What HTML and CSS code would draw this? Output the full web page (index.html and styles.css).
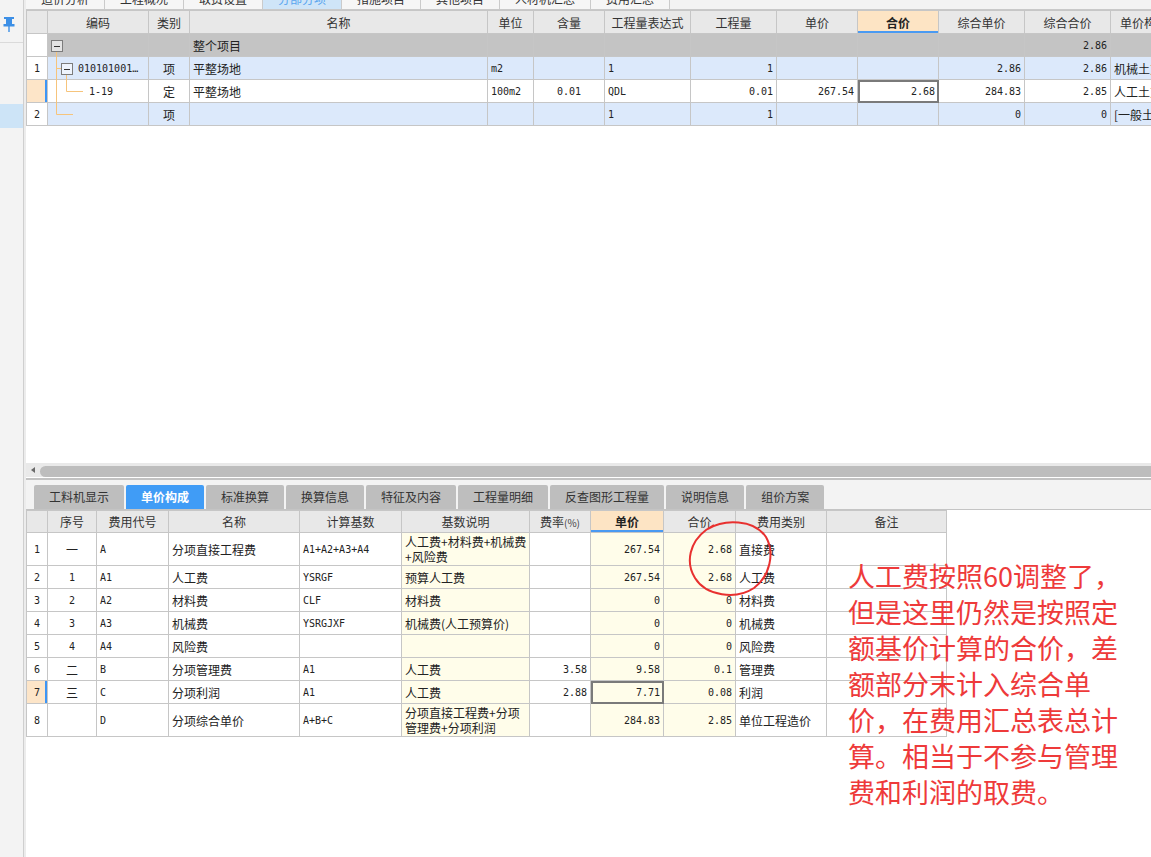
FILE: index.html
```html
<!DOCTYPE html>
<html lang="zh-CN">
<head>
<meta charset="utf-8">
<title>分部分项 - 单价构成</title>
<link rel="stylesheet" href="styles.css">
</head>
<body>
<div class="app">
  <aside class="side">
    <div class="side-top">
      <svg class="pin" width="16" height="16" viewBox="0 0 16 16"><path d="M3 0h10v2h-2v5h2.5v2.4h-4.8v5.6h-1.4v-5.6h-4.8v-2.4h2.5v-5h-2z" fill="#3c8fe6"/></svg>
    </div>
    <div class="side-gap"></div>
    <div class="side-hl"></div>
  </aside>

  <main class="main">
    <nav class="toptabs">
      <div class="toptab"><span>造价分析</span></div>
      <div class="toptab"><span>工程概况</span></div>
      <div class="toptab"><span>取费设置</span></div>
      <div class="toptab active"><span>分部分项</span></div>
      <div class="toptab"><span>措施项目</span></div>
      <div class="toptab"><span>其他项目</span></div>
      <div class="toptab"><span>人材机汇总</span></div>
      <div class="toptab"><span>费用汇总</span></div>
    </nav>

    <section class="grid-top">
      <table class="tbl tbl-top">
        <colgroup>
          <col class="w21"><col class="w101"><col class="w41"><col class="w298"><col class="w46"><col class="w71"><col class="w86"><col class="w86"><col class="w81"><col class="w81"><col class="w86"><col class="w86"><col class="w100">
        </colgroup>
        <tr class="hd">
          <th></th><th>编码</th><th>类别</th><th>名称</th><th>单位</th><th>含量</th><th>工程量表达式</th><th>工程量</th><th>单价</th><th class="hot">合价</th><th>综合单价</th><th>综合合价</th><th class="l">单价构成</th>
        </tr>
        <tr class="r-grey">
          <td class="rn"></td><td></td><td></td><td class="b">整个项目</td><td></td><td></td><td></td><td></td><td></td><td></td><td></td><td class="r n b">2.86</td><td></td>
        </tr>
        <tr class="r-blue">
          <td class="rn n c">1</td><td class="code1 n">010101001…</td><td class="c">项</td><td>平整场地</td><td class="n">m2</td><td></td><td class="n">1</td><td class="r n">1</td><td></td><td></td><td class="r n">2.86</td><td class="r n">2.86</td><td>机械土方工程</td>
        </tr>
        <tr class="r-white">
          <td class="rn edit"></td><td class="code2 n">1-19</td><td class="c">定</td><td>平整场地</td><td class="n">100m2</td><td class="c n">0.01</td><td class="n">QDL</td><td class="r n">0.01</td><td class="r n">267.54</td><td class="r n sel">2.68</td><td class="r n">284.83</td><td class="r n">2.85</td><td>人工土方工程</td>
        </tr>
        <tr class="r-blue">
          <td class="rn n c">2</td><td></td><td class="c">项</td><td></td><td></td><td></td><td class="n">1</td><td class="r n">1</td><td></td><td></td><td class="r n">0</td><td class="r n">0</td><td>[一般土建工程]</td>
        </tr>
      </table>
      <svg class="tree" width="80" height="120" viewBox="0 0 80 120">
        <g stroke="#f6c47c" stroke-width="1" fill="none">
          <path d="M30.5 42V104.5H47"/>
          <path d="M30.5 58.5H35"/>
          <path d="M40.5 65V81.5H57"/>
        </g>
        <g stroke="#7c7c7c" stroke-width="1">
          <rect x="25.5" y="30.5" width="11" height="11" fill="#e4e4e4"/>
          <rect x="35.5" y="53.5" width="11" height="11" fill="#eef4fd"/>
        </g>
        <g stroke="#333" stroke-width="1">
          <path d="M28 36.5h6"/>
          <path d="M38 59.5h6"/>
        </g>
      </svg>
    </section>

    <div class="hscroll">
      <span class="arrow"></span>
      <span class="thumb"></span>
    </div>
    <div class="splitter"></div>

    <nav class="subtabs">
      <div class="subtab">工料机显示</div>
      <div class="subtab active">单价构成</div>
      <div class="subtab">标准换算</div>
      <div class="subtab">换算信息</div>
      <div class="subtab">特征及内容</div>
      <div class="subtab">工程量明细</div>
      <div class="subtab">反查图形工程量</div>
      <div class="subtab">说明信息</div>
      <div class="subtab">组价方案</div>
    </nav>

    <section class="grid-bottom">
      <table class="tbl tbl-bottom">
        <colgroup>
          <col class="w21"><col class="w49"><col class="w72"><col class="w131"><col class="w102"><col class="w128"><col class="w61"><col class="w73"><col class="w72"><col class="w91"><col class="w120">
        </colgroup>
        <tr class="hd">
          <th></th><th>序号</th><th>费用代号</th><th>名称</th><th>计算基数</th><th>基数说明</th><th>费率<small>(%)</small></th><th class="hot">单价</th><th>合价</th><th>费用类别</th><th>备注</th>
        </tr>
        <tr class="tall">
          <td class="rn n c">1</td><td class="c">一</td><td class="n">A</td><td>分项直接工程费</td><td class="n">A1+A2+A3+A4</td><td class="y two">人工费+材料费+机械费<br>+风险费</td><td></td><td class="y r n">267.54</td><td class="y r n">2.68</td><td>直接费</td><td></td>
        </tr>
        <tr>
          <td class="rn n c">2</td><td class="c n">1</td><td class="n">A1</td><td>人工费</td><td class="n">YSRGF</td><td class="y">预算人工费</td><td></td><td class="y r n">267.54</td><td class="y r n">2.68</td><td>人工费</td><td></td>
        </tr>
        <tr>
          <td class="rn n c">3</td><td class="c n">2</td><td class="n">A2</td><td>材料费</td><td class="n">CLF</td><td class="y">材料费</td><td></td><td class="y r n">0</td><td class="y r n">0</td><td>材料费</td><td></td>
        </tr>
        <tr>
          <td class="rn n c">4</td><td class="c n">3</td><td class="n">A3</td><td>机械费</td><td class="n">YSRGJXF</td><td class="y">机械费(人工预算价)</td><td></td><td class="y r n">0</td><td class="y r n">0</td><td>机械费</td><td></td>
        </tr>
        <tr>
          <td class="rn n c">5</td><td class="c n">4</td><td class="n">A4</td><td>风险费</td><td></td><td class="y"></td><td></td><td class="y r n">0</td><td class="y r n">0</td><td>风险费</td><td></td>
        </tr>
        <tr>
          <td class="rn n c">6</td><td class="c">二</td><td class="n">B</td><td>分项管理费</td><td class="n">A1</td><td class="y">人工费</td><td class="r n">3.58</td><td class="y r n">9.58</td><td class="y r n">0.1</td><td>管理费</td><td></td>
        </tr>
        <tr>
          <td class="rn n c edit b">7</td><td class="c">三</td><td class="n">C</td><td>分项利润</td><td class="n">A1</td><td class="y">人工费</td><td class="r n">2.88</td><td class="y r n sel">7.71</td><td class="y r n">0.08</td><td>利润</td><td></td>
        </tr>
        <tr class="tall">
          <td class="rn n c">8</td><td></td><td class="n">D</td><td>分项综合单价</td><td class="n">A+B+C</td><td class="y two">分项直接工程费+分项<br>管理费+分项利润</td><td></td><td class="y r n">284.83</td><td class="y r n">2.85</td><td>单位工程造价</td><td></td>
        </tr>
      </table>
      <svg class="circle" width="120" height="100" viewBox="0 0 120 100">
        <path d="M38 19C54 9 84 9 96 27C105 43 100 66 84 78C66 90 36 86 25 68C15 52 20 32 36 20L44 15" fill="none" stroke="#e8302f" stroke-width="2"/>
      </svg>
      <p class="note">人工费按照60调整了，<br>但是这里仍然是按照定<br>额基价计算的合价，差<br>额部分末计入综合单<br>价，在费用汇总表总计<br>算。相当于不参与管理<br>费和利润的取费。</p>
    </section>
  </main>
</div>
</body>
</html>
```

FILE: styles.css
```css
* { box-sizing: border-box; }

html, body {
  margin: 0;
  padding: 0;
}

body {
  width: 1151px;
  height: 857px;
  overflow: hidden;
  background: #ffffff;
  color: #222222;
  font-family: "Noto Sans CJK SC", "Noto Sans", sans-serif;
  font-size: 12px;
}

.app {
  display: flex;
  height: 857px;
}

/* ---------- left strip ---------- */
.side {
  width: 24px;
  flex: none;
  background: #f3f3f3;
  border-right: 1px solid #cfcfcf;
  display: flex;
  flex-direction: column;
}

.side-top {
  height: 43px;
  border-bottom: 1px solid #dadada;
  padding: 17px 0 0 1px;
}

.pin { display: block; }

.side-gap { height: 61px; }

.side-hl {
  height: 24px;
  background: #cde4f7;
}

/* ---------- main ---------- */
.main {
  flex: 1;
  min-width: 0;
  border-left: 2px solid #ececec;
  display: flex;
  flex-direction: column;
}

.toptabs {
  height: 10px;
  flex: none;
  display: flex;
  background: #f3f3f3;
  border-bottom: 1px solid #c9c9c9;
  overflow: hidden;
}

.toptab {
  flex: none;
  padding: 0 15px;
  background: #f6f6f6;
  border-right: 1px solid #cbcbcb;
  color: #333333;
  line-height: 12px;
  overflow: hidden;
}

.toptab span {
  display: block;
  margin-top: -7px;
}

.toptab.active {
  background: #cfe5f8;
  color: #5aa6ef;
}

/* ---------- tables ---------- */
.grid-top {
  position: relative;
  height: 453px;
  flex: none;
  overflow: hidden;
  background: #ffffff;
}

.tbl {
  border-collapse: collapse;
  table-layout: fixed;
}

.tbl-top { width: 1184px; }
.tbl-bottom { width: 920px; }

.tbl th,
.tbl td {
  border: 1px solid #c6c6c6;
  padding: 0 3px;
  white-space: nowrap;
  overflow: hidden;
  vertical-align: middle;
  font-weight: normal;
  text-align: left;
}

.tbl th {
  background: #e8e8e8;
  color: #333333;
  text-align: center;
}

.tbl th.l { text-align: left; padding-left: 9px; }

.tbl th.hot {
  background: #fde4c4;
  font-weight: bold;
  color: #222222;
  box-shadow: inset 0 -2px 0 #4a9af2;
}

.tbl-top tr { height: 23px; }
.tbl-top tr.hd { height: 23px; }
.tbl-bottom tr { height: 23px; }
.tbl-bottom tr.hd { height: 22px; }
.tbl-bottom tr.tall { height: 33px; }

.w21 { width: 21px; }
.w41 { width: 41px; }
.w46 { width: 46px; }
.w49 { width: 49px; }
.w61 { width: 61px; }
.w71 { width: 71px; }
.w72 { width: 72px; }
.w73 { width: 73px; }
.w81 { width: 81px; }
.w86 { width: 86px; }
.w91 { width: 91px; }
.w100 { width: 100px; }
.w101 { width: 101px; }
.w102 { width: 102px; }
.w120 { width: 120px; }
.w128 { width: 128px; }
.w131 { width: 131px; }
.w298 { width: 298px; }

.r-grey td { background: #c4c4c4; }
.r-blue td { background: #dce9fb; }
.r-white td { background: #ffffff; }

.tbl td.rn { background: #ffffff; }
.tbl td.rn.edit {
  background: #fde5c8;
  box-shadow: inset -2px 0 0 #3d95f5;
}

.n {
  font-family: "DejaVu Sans Mono", "Liberation Mono", monospace;
  font-size: 10px;
}

.c { text-align: center !important; }
.r { text-align: right !important; }
.b { font-weight: bold; }

.tbl td.y { background: #fffdea; }

.tbl td.two { line-height: 15px; }

.tbl td.sel {
  outline: 2px solid #7a7a7a;
  outline-offset: -2px;
}

.code1 { padding-left: 30px !important; }
.code2 { padding-left: 41px !important; }

.tree {
  position: absolute;
  left: 0;
  top: 0;
  pointer-events: none;
}

/* ---------- scrollbar / splitter ---------- */
.hscroll {
  height: 14px;
  flex: none;
  display: flex;
  align-items: center;
  background: #e9e9e9;
  padding-left: 5px;
}

.arrow {
  width: 0;
  height: 0;
  border-top: 3px solid transparent;
  border-bottom: 3px solid transparent;
  border-right: 4px solid #6a6a6a;
}

.thumb {
  flex: 1;
  height: 11px;
  margin-left: 5px;
  margin-top: 2px;
  background: #bdbdbd;
  border-radius: 6px 0 0 6px;
}

.splitter {
  height: 3px;
  flex: none;
  background: #ffffff;
  border-bottom: 2px solid #c2c2c2;
}

/* ---------- sub tabs ---------- */
.subtabs {
  height: 30px;
  flex: none;
  display: flex;
  align-items: flex-end;
  gap: 2px;
  padding-left: 8px;
  background: #f3f3f3;
  border-bottom: 1px solid #c4c4c4;
}

.subtab {
  height: 24px;
  padding: 0 15px;
  background: #bebebe;
  color: #333333;
  line-height: 24px;
  border-radius: 2px 2px 0 0;
}

.subtab.active {
  background: #409cf6;
  color: #ffffff;
  font-weight: bold;
}

/* ---------- bottom grid ---------- */
.grid-bottom {
  position: relative;
  flex: 1;
  background: #ffffff;
  overflow: hidden;
}

.tbl-bottom small {
  font-size: 10px;
  color: #444444;
}

.circle {
  position: absolute;
  left: 644px;
  top: 0;
  pointer-events: none;
}

.note {
  position: absolute;
  left: 822px;
  top: 48px;
  margin: 0;
  width: 300px;
  color: #ee3a3a;
  font-family: "Noto Sans CJK SC", sans-serif;
  font-size: 27px;
  line-height: 36px;
  white-space: nowrap;
}
```
